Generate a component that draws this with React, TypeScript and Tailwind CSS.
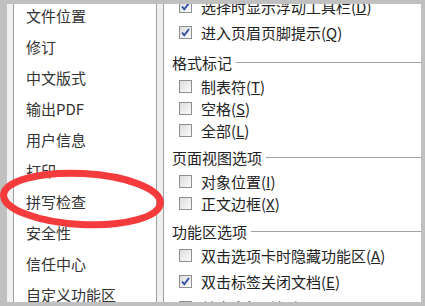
import type { ReactNode } from "react";

const items = [
  "文件位置",
  "修订",
  "中文版式",
  "输出PDF",
  "用户信息",
  "打印",
  "拼写检查",
  "安全性",
  "信任中心",
  "自定义功能区",
];

function Box({ checked }: { checked?: boolean }) {
  return (
    <span className="relative w-[13px] h-[13px] shrink-0 border border-[#8e8f8f] bg-gradient-to-br from-[#dcdcdc] to-[#fcfcfc]">
      {checked && (
        <svg className="absolute left-0 top-0" width="11" height="11" viewBox="0 0 11 11">
          <path d="M2 5.5 L4.3 8.3 L9 2" fill="none" stroke="#2f4fa8" strokeWidth="1.9" />
        </svg>
      )}
    </span>
  );
}

function Row({ h, checked, label, k }: { h: string; checked?: boolean; label: string; k: string }) {
  return (
    <div className={`${h} flex items-center pl-[15px] gap-[9px] whitespace-nowrap`}>
      <Box checked={checked} />
      <span>
        {label}(<span className="underline">{k}</span>)
      </span>
    </div>
  );
}

function Header({ children, mt }: { children: ReactNode; mt: string }) {
  return (
    <div className={`${mt} h-[22px] flex items-center pl-[8px]`}>
      <span>{children}</span>
      <div className="flex-1 h-px bg-[#a0a0a0] ml-[4px]" />
    </div>
  );
}

export default function App() {
  return (
    <div className="relative w-[425px] h-[306px] overflow-hidden bg-[#c0c0c0] pt-[4px] pl-[7px] pr-[4px] pb-[4px] flex font-['Noto_Sans_CJK_SC',sans-serif] text-[15px] leading-none text-[#222]">
      <div className="w-[6px] bg-[#f0f0f0]" />

      {/* option list */}
      <div className="w-[144px] bg-white border-x border-[#a0a0a0] overflow-hidden">
        <div className="-mt-[4px]">
          {items.map((t) => (
            <div key={t} className="h-[31px] flex items-center pl-[12px] text-[#333] whitespace-nowrap">
              {t}
            </div>
          ))}
        </div>
      </div>

      <div className="w-[6px] bg-[#f0f0f0]" />

      {/* settings */}
      <div className="flex-1 bg-white border-l border-[#a0a0a0] overflow-hidden">
        <div className="-mt-[11px] flex flex-col">
          <Row h="h-[26px]" checked label="选择时显示浮动工具栏" k="D" />
          <Row h="h-[26px]" checked label="进入页眉页脚提示" k="Q" />
          <Header mt="mt-[6px]">格式标记</Header>
          <Row h="mt-[3px] h-[21px]" label="制表符" k="T" />
          <Row h="h-[22px]" label="空格" k="S" />
          <Row h="h-[22px]" label="全部" k="L" />
          <Header mt="mt-[5px]">页面视图选项</Header>
          <Row h="mt-[3px] h-[21px]" label="对象位置" k="I" />
          <Row h="h-[22px]" label="正文边框" k="X" />
          <Header mt="mt-[6px]">功能区选项</Header>
          <Row h="h-[26px]" label="双击选项卡时隐藏功能区" k="A" />
          <Row h="h-[26px]" checked label="双击标签关闭文档" k="E" />
          <Row h="h-[26px]" checked label="单击方框时打勾" k="O" />
        </div>
      </div>

      {/* red annotation */}
      <svg className="absolute left-0 top-0 pointer-events-none" width="425" height="306">
        <ellipse
          cx="82"
          cy="199"
          rx="78.5"
          ry="25.5"
          fill="none"
          stroke="#f53b3b"
          strokeWidth="7"
          transform="rotate(3 82 199)"
        />
      </svg>
    </div>
  );
}
